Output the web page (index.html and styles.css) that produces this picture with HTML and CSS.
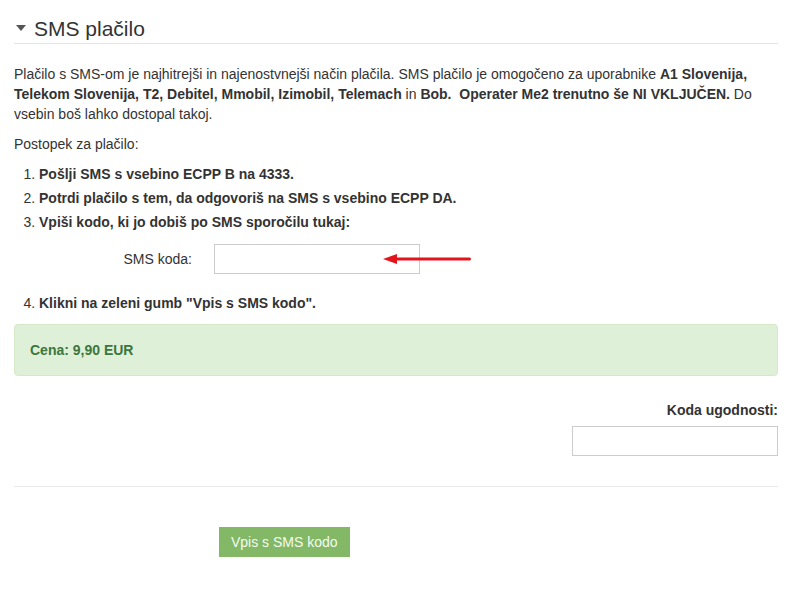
FILE: index.html
```html
<!DOCTYPE html>
<html lang="sl">
<head>
    <meta charset="UTF-8">
    <meta name="viewport" content="width=device-width, initial-scale=1.0">
    <title>SMS plačilo</title>
    <link rel="stylesheet" href="styles.css">
</head>
<body>

<div class="container">
    <h2 class="section-title"><span class="caret"></span>SMS plačilo</h2>

    <p class="intro">Plačilo s SMS-om je najhitrejši in najenostvnejši način plačila. SMS plačilo je omogočeno za uporabnike <strong>A1 Slovenija, Telekom Slovenija, T2, Debitel, Mmobil, Izimobil, Telemach</strong> in <strong>Bob.&nbsp; Operater Me2 trenutno še NI VKLJUČEN.</strong> Do vsebin boš lahko dostopal takoj.</p>

    <p class="steps-title">Postopek za plačilo:</p>

    <ol class="steps">
        <li><strong>Pošlji SMS s vsebino ECPP B na 4333.</strong></li>
        <li><strong>Potrdi plačilo s tem, da odgovoriš na SMS s vsebino ECPP DA.</strong></li>
        <li>
            <strong>Vpiši kodo, ki jo dobiš po SMS sporočilu tukaj:</strong>
            <div class="code-row">
                <label class="code-label" for="smsCode">SMS koda:</label>
                <div class="code-field">
                    <input type="text" id="smsCode" class="text-input">
                    <!-- rdeča puščica -->
                    <svg class="arrow" width="90" height="12" viewBox="0 0 90 12">
                        <polygon points="0,6 14,1 14,11" fill="#e3141b"/>
                        <rect x="12" y="4.5" width="76" height="3" rx="1.5" fill="#e3141b"/>
                    </svg>
                </div>
            </div>
        </li>
        <li><strong>Klikni na zeleni gumb "Vpis s SMS kodo".</strong></li>
    </ol>

    <div class="alert-success"><strong>Cena: 9,90 EUR</strong></div>

    <div class="discount">
        <label class="discount-label" for="discountCode">Koda ugodnosti:</label>
        <input type="text" id="discountCode" class="text-input">
    </div>

    <hr class="divider">

    <div class="actions">
        <button class="btn-green">Vpis s SMS kodo</button>
    </div>
</div>

</body>
</html>
```

FILE: styles.css
```css
* {
    box-sizing: border-box;
}

body {
    margin: 0;
    font-family: "Liberation Sans", Arial, sans-serif;
    font-size: 14px;
    line-height: 20px;
    color: #333;
    background-color: white;
}

.container {
    padding: 0 15px 0 14px;
}

.section-title {
    margin: 17px 0 0;
    padding-bottom: 3px;
    font-size: 21px;
    line-height: 23px;
    font-weight: normal;
    color: #333;
    border-bottom: 1px solid #e5e5e5;
}

/* little triangle before the title */
.caret {
    display: inline-block;
    width: 0;
    height: 0;
    margin: 0 8px 4px 2px;
    vertical-align: middle;
    border-left: 5.5px solid transparent;
    border-right: 5.5px solid transparent;
    border-top: 6px solid #555;
}

.intro {
    margin: 20px 0 0;
}

.steps-title {
    margin: 10px 0 0;
}

.steps {
    margin: 10px 0 0;
    padding-left: 25px;
}
.steps li {
    margin-bottom: 4px;
}

.code-row {
    display: flex;
    align-items: center;
    margin: 12px 0 19px;
}
.code-label {
    width: 153px;
    text-align: right;
    margin-right: 22px;
}
.code-field {
    position: relative;
}
.arrow {
    position: absolute;
    left: 169px;
    top: 9px;
}

.text-input {
    width: 206px;
    height: 30px;
    border: 1px solid #ccc;
    padding: 4px 8px;
    font-size: 14px;
    font-family: inherit;
    background-color: white;
}

.alert-success {
    margin-top: 11px;
    padding: 15px;
    background-color: #dff0d8;
    border: 1px solid #d6e9c6;
    border-radius: 4px;
    color: #3c763d;
}

.discount {
    margin-top: 24px;
    display: flex;
    flex-direction: column;
    align-items: flex-end;
}
.discount-label {
    font-weight: bold;
    margin-bottom: 6px;
}

.divider {
    margin: 30px 0 0;
    border: none;
    border-top: 1px solid #ebebeb;
}

.actions {
    padding: 40px 0 0 205px;
}

.btn-green {
    height: 30px;
    padding: 0 12px;
    font-family: inherit;
    font-size: 14px;
    color: #f4faf0;
    background-color: #82b866;
    border: none;
    cursor: pointer;
}
```
